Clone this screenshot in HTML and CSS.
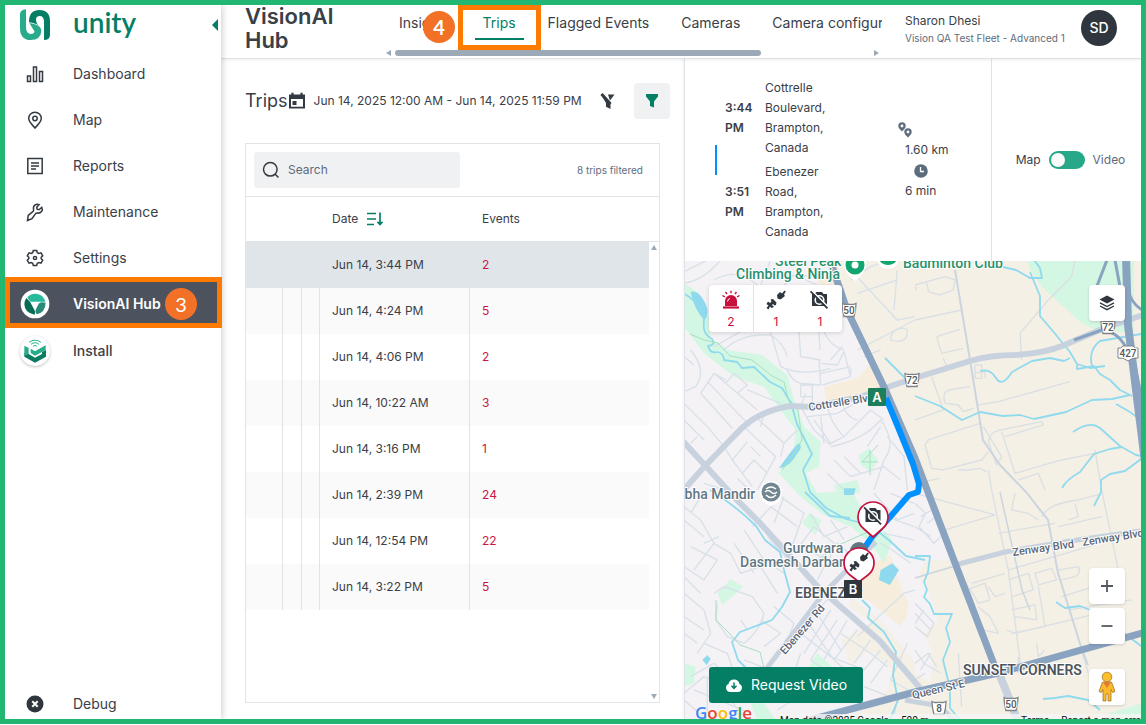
FILE: index.html
```html
<!DOCTYPE html>
<html lang="en">
<head>
<meta charset="utf-8">
<title>VisionAI Hub - Trips</title>
<link rel="stylesheet" href="styles.css">
</head>
<body>
<div class="frame">
  <aside class="sidebar">
    <div class="brand">
      <svg class="brand-mark" viewBox="57 26 96 96" aria-hidden="true">
        <path d="M78 27V78Q78 101 92 101Q101 101 104 94L88 68 105 72Q124 78 124 92Q122 119 92 119Q60 119 60 82V42Q60 28 78 27z" fill="#28ab8a"/>
        <path d="M87 62Q88 29 119 29Q150 29 150 64V104Q150 119 132 119V64Q132 47 119 47Q108 47 108 58Q108 68 116 76Q106 68 87 66z" fill="#047f65"/>
      </svg>
      <span class="brand-name">unity</span>
      <button class="collapse" aria-label="Collapse menu"></button>
    </div>
    <nav class="nav">
      <a href="#"><svg viewBox="0 0 20 20" class="line"><path d="M2.500 12h3v5.500h-3zM8.500 3h3v14.500h-3zM14.500 7.500h3v10h-3z"/></svg>Dashboard</a>
      <a href="#"><svg viewBox="0 0 20 20" class="line"><path d="M10 18C6 13.500 3.700 11.500 3.700 8.500a6.300 6.300 0 0 1 12.600 0C16.300 11.500 14 13.500 10 18z"/><circle cx="10" cy="8.500" r="2.200"/></svg>Map</a>
      <a href="#"><svg viewBox="0 0 20 20" class="line"><path d="M2.800 2.500h14.400v15H2.800zM6 7h8M6 10h8M6 13h5"/></svg>Reports</a>
      <a href="#"><svg viewBox="0 0 20 20" class="line"><path d="M16.800 5.300l-2.700 2.400-2-.5-.4-2 2.500-2.600C11 1.200 7.600 3.800 8.600 7.600c.2.900-.2 1.500-.8 2L3.200 13.300 2.500 18.500 7 16.600l3.400-4.700c.4-.6 1.200-.9 2-.8 3.600.3 6-2.700 4.400-5.800z"/></svg>Maintenance</a>
      <a href="#"><svg viewBox="0 0 20 20" class="line"><path d="M8.300 2.500h3.400l.6 2.200 1.500.8 2.200-.6 1.700 2.900-1.500 1.500v1.400l1.500 1.500-1.700 2.900-2.200-.6-1.500.8-.6 2.200H8.300l-.6-2.200-1.500-.8-2.200.6-1.700-2.900 1.500-1.500V9.300L2.300 7.800 4 4.900l2.200.6 1.500-.8z"/><circle cx="10" cy="10" r="1.600"/></svg>Settings</a>
      <a href="#" class="active"><svg viewBox="0 0 90 90" class="product"><circle cx="45" cy="45" r="43" fill="#fff"/><path d="M22 24Q33 13 48 14Q70 16 76 38H32Q24 32 22 24z" fill="#27ba9c"/><path d="M77 41Q76 70 50 76Q44 70 47 62L56 44Q62 38 77 41z" fill="#2a8a78"/><path d="M19 27L30 38 43 62Q47 68 44 77Q14 72 13 46Q13 35 19 27z" fill="#086b54"/></svg>VisionAI Hub<span class="badge badge-side">3</span></a>
      <a href="#" class="install"><svg viewBox="0 0 90 90" class="product"><circle cx="45" cy="45" r="44" fill="#fff"/><path d="M13 50L26 54 45 65 66 54V48L78 42V62L45 80 13 62z" fill="#0a7a61"/><path d="M13 29L26 36V54L13 60zM32 38L45 46 77 28V42L45 59 32 51z" fill="#27ab88"/><path d="M27 19Q45 6 63 19M33 25Q45 15 57 25M39 31Q45 25 51 31" fill="none" stroke="#27ba92" stroke-width="3"/></svg>Install</a>
    </nav>
    <a href="#" class="debug"><svg viewBox="0 0 20 20"><circle cx="10" cy="10" r="8.500" fill="#30363d"/><path d="M7.300 7.300l5.400 5.400M12.700 7.300l-5.400 5.400" stroke="#fff" stroke-width="2"/></svg>Debug</a>
  </aside>

  <div class="main">
    <header class="topbar">
      <h1>VisionAI Hub</h1>
      <div class="tabs-area">
        <nav class="tabs">
          <a href="#">Insights</a>
          <a href="#" class="current">Trips</a>
          <a href="#">Flagged Events</a>
          <a href="#">Cameras</a>
          <a href="#">Camera configuration</a>
        </nav>
        <div class="hscroll"><i class="arrow-left"></i><span class="track"><b></b></span><i class="arrow-right"></i></div>
        <span class="highlight"></span>
        <span class="badge badge-tab">4</span>
      </div>
      <div class="user">
        <div class="user-text"><div class="user-name">Sharon Dhesi</div><div class="user-fleet">Vision QA Test Fleet - Advanced 1</div></div>
        <button class="avatar">SD</button>
      </div>
    </header>

    <div class="content">
      <section class="trips">
        <div class="trips-head">
          <h2>Trips</h2>
          <button class="range"><svg viewBox="0 0 18 18"><path d="M1 2.500h16v14H1z" fill="#343a42"/><path d="M4.500 .8v3M13.500 .8v3" stroke="#343a42" stroke-width="2.200"/><path d="M3 7h12v7.700H3z" fill="#fff"/><path d="M4.500 9h4v4h-4z" fill="#343a42"/></svg>Jun 14, 2025 12:00 AM - Jun 14, 2025 11:59 PM</button>
          <button class="filter-off" aria-label="Clear filters"><svg viewBox="0 0 18 18"><path d="M2.500 3.500L11.500 11.500V17L7 14.800V11z" fill="#343a42"/><path d="M9 2.500h6.500L11 8.500z" fill="#343a42"/><path d="M3.500 1.500L14 12" stroke="#fff" stroke-width="1"/><path d="M2.500 2L11.500 12" stroke="#343a42" stroke-width="3"/></svg></button>
          <button class="filter" aria-label="Filter"><svg viewBox="0 0 16 16"><path d="M2 1h12v2.500L10 8.500v6L6 13V8.500L2 3.500z" fill="#047f65"/></svg></button>
        </div>
        <div class="card">
          <div class="tools">
            <label class="search"><svg viewBox="0 0 18 18"><circle cx="8.300" cy="8.300" r="6.800" fill="none" stroke="#343a42" stroke-width="1.500"/><path d="M13 13l3.500 3.500" stroke="#343a42" stroke-width="1.500"/></svg><input type="text" placeholder="Search" aria-label="Search"></label>
            <span class="count">8 trips filtered</span>
          </div>
          <table>
            <colgroup><col class="c1"><col class="c2"><col class="c3"><col class="c4"><col><col class="c6"></colgroup>
            <thead><tr><th></th><th></th><th></th><th class="date">Date <svg viewBox="0 0 16 14"><path d="M0 1.500h9M0 7h9M0 12.500h7" stroke="#047f65" stroke-width="1.600"/><path d="M13 .5v11M10.500 9.800L13 12.500l2.500-2.700" fill="none" stroke="#047f65" stroke-width="1.700"/></svg></th><th>Events</th><th></th></tr></thead>
            <tbody>
              <tr class="selected"><td></td><td></td><td></td><td>Jun 14, 3:44 PM</td><td>2</td></tr>
              <tr><td></td><td></td><td></td><td>Jun 14, 4:24 PM</td><td>5</td></tr>
              <tr><td></td><td></td><td></td><td>Jun 14, 4:06 PM</td><td>2</td></tr>
              <tr><td></td><td></td><td></td><td>Jun 14, 10:22 AM</td><td>3</td></tr>
              <tr><td></td><td></td><td></td><td>Jun 14, 3:16 PM</td><td>1</td></tr>
              <tr><td></td><td></td><td></td><td>Jun 14, 2:39 PM</td><td>24</td></tr>
              <tr><td></td><td></td><td></td><td>Jun 14, 12:54 PM</td><td>22</td></tr>
              <tr><td></td><td></td><td></td><td>Jun 14, 3:22 PM</td><td>5</td></tr>
            </tbody>
          </table>
          <i class="arrow-up"></i><i class="arrow-down"></i>
        </div>
      </section>

      <section class="detail">
        <div class="summary">
          <div class="legs">
            <span class="leg-line"></span>
            <div class="leg-list">
              <div class="leg"><strong>3:44 PM</strong><span>Cottrelle Boulevard, Brampton, Canada</span></div>
              <div class="leg"><strong>3:51 PM</strong><span>Ebenezer Road, Brampton, Canada</span></div>
            </div>
            <div class="stats">
              <svg class="pins" viewBox="0 0 14 16"><path fill-rule="evenodd" d="M4 9.500C1.500 7 .3 5.800.3 4a3.700 3.700 0 0 1 7.400 0C7.700 5.800 6.500 7 4 9.500zM4 2.600a1.400 1.400 0 1 0 0 2.800 1.400 1.400 0 0 0 0-2.800zM10 15.500C7.500 13 6.300 11.800 6.300 10a3.700 3.700 0 0 1 7.400 0c0 1.800-1.200 3-3.700 5.500zM10 8.600a1.400 1.400 0 1 0 0 2.800 1.400 1.400 0 0 0 0-2.800z" fill="#5d6c7d"/></svg>
              <span>1.60 km</span>
              <svg class="clock" viewBox="0 0 14 14"><circle cx="7" cy="7" r="6.800" fill="#5d6c7d"/><path d="M6.500 3v4.500H10" fill="none" stroke="#fff" stroke-width="1.300"/></svg>
              <span>6 min</span>
            </div>
          </div>
          <label class="switch"><span>Map</span><input type="checkbox" role="switch"><span class="muted">Video</span></label>
        </div>

        <div class="map">
          <svg class="map-art" viewBox="685 261 456 458" preserveAspectRatio="xMidYMid slice" role="img" aria-label="Trip map">
            <defs>
              <g id="shield"><path d="M-7-6.500L-4-5.500H4L7-6.500 6.500 0 5 6.500H-5L-6.500 0z" fill="#fff" stroke="#7f8387" stroke-width="1.300"/></g>
              <g id="nocam"><path d="M2 4H4L6.500 2H12L13.500 4H17V16H2z" fill="#30363d"/><circle cx="9.500" cy="10" r="4.300" fill="none" stroke="#fff" stroke-width="1.600"/><path d="M1.500 .3L19 17.800" stroke="#fff" stroke-width="1.800"/><path d="M.5 1.300L17.500 18.300" stroke="#30363d" stroke-width="1.800"/></g>
              <g id="plug" fill="#30363d"><path d="M11 5L14 2 16 3.500 18.500.5 19.800 1.500 18 4.500 19 6 14.500 9.500 11.500 8.500z"/><path d="M4.500 9.500L7 9 10.500 12.500 10 15 8.500 15.500 7 14 6 15 8 17 5.500 18 4 16.500 2.500 19.500.5 18 2.500 15.500.5 14 2 11.500 4 13 5.500 11.500z"/></g>
            </defs>
            <rect x="600" y="200" width="640" height="600" fill="#f4f2f5"/>
            <path d="M829 261L886 390 918 470 1000 680 1018 730H1240V200H800z" fill="#f5f0e5"/>
            <path d="M852 598L880 620 905 650 930 684 932 650 920 628 912 590 926 560 952 560 1002 680 1016 730H840L862 710 888 690 892 668 870 650 850 665 842 640 872 622 848 606z" fill="#f5f0e5"/>
            <path d="M862 570L890 555 902 590 912 610 900 626 868 600 850 598z" fill="#f6eddc"/>
            <path d="M818 280L836 276 846 300 820 288z" fill="#f6eddc"/>
            <path d="M914 570L928 590 938 620 918 640 906 620zM918 655l16 12-6 14-14-8z" fill="#f4f2f5"/>

            <!-- parks and ravines -->
            <g fill="#d3f7e2" transform="translate(684 260) scale(.3333)">
              <path d="M0 70L45 100 80 180 80 235 130 270 235 285 310 345 330 420 360 500 410 545 405 620 365 640 400 700 500 690 525 730 590 800 625 840 600 910 560 850 500 800 420 765 350 710 285 640 330 560 335 510 290 450 240 380 150 350 60 280 0 200z"/>
              <path d="M1028 0H1350V215L1250 215 1193 190 1073 80 1040 30z"/>
              <path d="M525 585L555 565 582 600 560 635 530 615zM355 790L375 760 412 780 395 825zM100 1000L140 958 178 980 115 1035zM375 1220L400 1180 445 1220zM0 1210L35 1220 30 1270 0 1280zM200 1330H240L275 1380H220zM1273 1360L1375 1330V1400H1290zM450 675L520 660 530 700H460z"/>
            </g>
            <path d="M824 387L858 378 872 362 885 388 868 394 826 402z" fill="#f6eddc"/>
            <g fill="#8fd9ee" transform="translate(684 260) scale(.3333)">
              <path d="M20 95Q50 90 70 145 72 170 62 180 30 150 20 95zM285 625Q330 560 345 550 358 560 340 580 320 620 285 625zM590 930L625 910 645 930 618 975 585 960zM480 685h35l-5 20h-30zM55 1200l15-15 10 12-12 18z"/>
            </g>

            <!-- residential streets -->
            <g class="street" transform="translate(684 260) scale(.3333)">
              <path d="M0 35L70 0M0 70Q60 60 110 0M90 60Q160 20 220 75M230 75L260 0M300 75L330 45 400 75M250 30Q350 60 420 40M90 260L170 215M120 270Q170 220 260 225 300 250 310 290M260 215L290 320Q350 350 440 325M345 215L350 290 410 300M405 215L408 270M405 300L410 375 350 370Q320 360 310 330M410 340L500 320M410 310L460 315 480 275 500 350 500 325M440 300L475 260M415 375L500 350M350 375H385V410H350zM385 380V440M420 215Q440 260 480 270"/>
              <path d="M20 270Q70 330 35 380L0 395M0 290L30 315M50 400L90 340 125 360M90 340L220 450M125 370L150 340 190 375 160 400M70 365L200 500M50 400L145 505M0 430L70 500 120 560M0 480L60 540M20 550L40 530M120 560L145 600 175 640 205 680M145 600L190 545M180 500L275 590M215 470L300 550 340 510M275 590L220 690M300 550L290 590M240 460L230 500M190 390L290 430M175 640L210 600 250 640M200 560L230 590M160 655L205 700M60 670L120 690"/>
              <path d="M365 400L350 440 390 510 440 555M370 470L460 460 530 420M390 480L440 550 480 530 560 450 600 480M430 420Q430 480 480 530M475 420Q480 470 520 480M410 470L420 550M440 560Q540 540 590 480 640 550 600 600L570 690M450 600L500 650 600 620 650 660M480 590L530 640M590 500L550 560M430 640L480 690M610 530L660 590 670 690"/>
              <path d="M0 740L50 780 90 850 30 930M50 710L20 760M0 780L60 830M20 860L100 900 60 960 0 920M90 850L140 880 170 940 230 920 280 1000M0 950L50 1000M180 810L240 900 300 940M150 850L210 940M105 830L60 850M250 830L330 920M90 1000L120 980 205 1010 240 1060Q230 1110 180 1150L130 1130 95 1080 100 1030M170 1080L190 1110M230 1080L290 1120 240 1160M270 1040L330 1090 300 1170M0 1000L60 1050 80 1120 40 1180M0 1070L60 1110M0 1120L40 1150M60 1150L130 1180 150 1240M20 1250L90 1210 130 1250M70 1250V1360M30 1290L200 1360M0 1320L70 1380M180 1200L260 1230M90 1260L180 1370M0 1300L60 1250 190 1300"/>
              <path d="M205 800L290 710 360 760 320 870M260 740L340 800M300 710L270 790M330 880L390 800 450 850 430 920M380 760L420 830 490 800M400 900L460 850 520 900M370 870L430 900 400 960M440 780L480 840M590 850L625 870 680 910M600 820L690 840M570 700L640 780 690 760M620 700L690 730M580 760L690 800M430 1020L350 1100 300 1160M440 1050L360 1180M460 1080L380 1200 440 1240M400 1060L470 1170M380 1100L450 1200M490 1080L420 1200M350 1120L440 1190 540 1230M520 1110L450 1200M560 1140L510 1210M470 1120L560 1180 610 1220M590 1170L540 1230M350 1180L330 1240 390 1290M450 1200L520 1260M610 1200L560 1270M670 1150L620 1260 690 1300M520 1130L660 1000 693 990M540 1280L640 1320 630 1370M280 1350L360 1300 400 1330"/>
              <path d="M693 730L725 760 705 800 750 850 770 830M710 770L760 740M693 800L740 830M730 790L770 760M693 1030L750 1090 730 1130 693 1100M693 1060L740 1110M720 1050L693 1090M693 1170L720 1210 770 1240M740 1180L710 1230"/>
              <path d="M500 60L560 20 620 0M520 100L640 60M500 30L640 180 693 170M520 270L693 180M620 240Q620 210 650 205T665 235Q650 250 620 240zM540 290L590 270M630 150L640 30"/>
            </g>
            <g class="street east" transform="translate(915 260) scale(.3333)">
              <path d="M0 75L90 50 120 60 115 90 75 105 40 95 35 65M5 90L0 80M0 180L140 150M65 230L135 208M65 230L80 280 145 265M85 295L95 320M320 300L315 220 400 120 470 50 480 0M50 350L85 450 0 480M180 315H200V355H180zM180 340L210 335V355M165 380L100 390Q80 400 90 430L130 435 145 455 175 445M190 435L250 425 465 365M195 490L40 540 30 555 50 625 85 630 200 600 220 575M205 500L260 590 245 615 220 545Q220 520 255 510L380 485 385 495 270 530M260 515L300 640 440 600 540 580M540 570L560 690M130 630H160L195 625 215 635M310 660L370 640 390 690M220 630L230 690M0 670L75 655"/>
              <path d="M0 700L240 765M90 810L240 765M230 690L280 930 320 1240M250 820L420 790M280 930L590 840M560 690L610 930M170 970L270 940M155 970L205 1110 250 1120 225 1070 190 1040M165 985L210 970 225 1020 190 1030zM220 980L240 1010 270 1000M280 960L340 940 355 990 290 1010M360 940L410 925 425 960 370 975zM430 930L490 920Q500 940 480 950L440 960M370 980L390 1100 290 1120M290 1050L360 1035 365 1080 300 1070M275 1110L300 1120 550 1060M440 1010L570 970M460 1050L650 1020M380 770Q400 730 490 720L565 700M300 700L290 750 340 760 370 780M480 730L490 770 460 780M430 800L560 770M365 1150L370 1190 390 1170M310 1190V1240M130 1180L140 1340M500 1170L520 1240M0 1210L40 1180 65 1220M0 1260L30 1240"/>
            </g>

            <!-- collector roads -->
            <g fill="none" stroke="#cbd5e0" stroke-width="2">
              <path d="M955 270L970 360 983 440 1000 465 1026 492 1048 520 1058 573 1082 650 1088 665"/>
              <path d="M1000 492L1022 590 1030 610M915 578L955 566" stroke-width="1.500"/>
            </g>

            <!-- streams -->
            <g fill="none" stroke="#8fdaee" stroke-width="1.800" stroke-linejoin="round">
              <path d="M685 294Q704 306 704 322 702 334 712 339 716 345 708 346 710 354 718 352 724 354 724 360L737 362 742 368 754 367 770 382 782 388 791 403 797 424 806 442 812 454 803 470 810 492 826 508 846 519 870 525 890 541 906 556 925 560"/>
              <path d="M710 490Q735 505 756 526L765 540 780 552 784 570 790 592 782 607 772 620 740 632 732 642 738 660 750 672M805 492L830 516 850 518M862 600L870 608 868 618 884 632 896 652 893 675 898 700 890 719"/>
              <path d="M915 556H930L928 572 924 582 927 590 924 597 930 604 934 614 952 614 946 628 950 642 943 660 950 688 950 708 960 720M985 260L1003 267 1016 270 1030 278 1042 278 1040 268 1034 260M1030 272L1040 296 1040 316 1052 330 1070 352 1077 364 1090 368 1105 366"/>
              <path d="M980 371Q990 368 996 378T1012 372L1032 361 1050 358 1064 361 1070 358M1077 365V369L1094 366 1100 374 1110 380 1120 390 1132 396M1092 366Q1088 350 1100 341L1141 334"/>
              <path d="M885 358L905 378M915 396L940 406 962 420 980 412 1003 416 1020 415 1034 419 1066 412 1092 400 1112 399 1130 395M1116 404L1130 412 1141 420M1073 432Q1090 420 1100 428L1120 446 1136 455 1141 456M1062 488Q1066 480 1080 472L1094 454 1110 449 1122 447M1101 492V480L1110 474 1125 471 1141 459M1101 492L1094 506M1056 602L1065 608 1080 606 1100 614 1120 630 1141 646M1043 699L1055 698 1068 696 1088 700 1100 710"/>
            </g>
            <g fill="none" stroke="#a7dfc3" stroke-width="1"><path d="M690 334L704 340 718 343 730 356 752 360 772 376 784 382 788 398 798 410 802 440 790 460 782 470M716 600V620L728 632 740 645 760 652 764 668M820 560L832 548 868 532M862 462L878 445M862 462H878M870 450V475"/></g>

            <!-- arterials -->
            <g class="arterial">
              <path d="M681 493L704 467 742 428Q760 411 790 406L812 407 860 397 885 388 915 378 970 361Q990 355 1015 355 1045 353 1062 346L1102 329 1146 314"/>
              <path d="M680 438L735 498 760 523 818 587 880 641 920 688"/>
              <path d="M767 668L824 593 854 563 876 542" stroke-width="5"/>
              <path d="M955 565L1005 552 1070 541 1146 530" stroke-width="5"/>
              <path d="M998 671L1011 703 1018 722" stroke-width="8"/>
              <path d="M905 700L940 706 955 722" stroke-width="5"/>
            </g>
            <g class="highway">
              <path d="M831 263L847 310 884 387 915 458 955 563 995 667"/>
              <path d="M760 733L810 720 915 692 998 673 1146 632"/>
              <path d="M1126 255L1128 325 1146 470" stroke-width="8"/>
              <path d="M1114 255L1130 340 1146 420M1107 260L1097 286M1128 290Q1132 306 1146 312M1074 340L1102 330Q1120 332 1128 352" stroke-width="3"/>
            </g>

            <!-- trip route -->
            <path d="M886 398L900 432 913 464 919 484 918 492 909 495 890 517 872 537 858 557" fill="none" stroke="#0090ff" stroke-width="6" stroke-linejoin="round"/>

            <g class="poi" fill="#27916c">
              <text x="775" y="266">Steel Peak</text><text x="736" y="279">Climbing &amp; Ninja</text><text x="903" y="268">Badminton Club</text>
            </g>
            <g><path d="M855 281Q845 274 844 265A11 11 0 0 1 866 265Q865 274 855 281z" fill="#fff"/><circle cx="855" cy="265" r="9.500" fill="#12a56f"/><circle cx="855" cy="265" r="3.500" fill="#fff"/><path d="M877 258a11 11 0 0 0 22 0" fill="#fff"/><path d="M879 258a9 7 0 0 0 18 0" fill="#12a56f"/></g>
            <g class="poi" fill="#607783"><text x="677" y="499">abha Mandir</text><text x="783" y="553">Gurdwara</text><text x="740" y="567">Dasmesh Darbar</text></g>
            <path d="M771 506Q760 502 760 492A11 11 0 0 1 782 492Q782 502 771 506z" fill="#fff"/><circle cx="771" cy="492" r="9.500" fill="#718691"/><path d="M766 489q5-4 10 0M765 492q3-3 6 0 3 3 6 0M766 495q5 5 10 0" fill="none" stroke="#fff" stroke-width="1.500"/>
            <circle cx="859" cy="551" r="9" fill="#607783"/>
            <g class="place"><text x="795" y="598">EBENEZER</text><text x="963" y="675">SUNSET CORNERS</text></g>
            <g class="road-name">
              <text transform="translate(809 411) rotate(-9)">Cottrelle Blvd</text>
              <text transform="translate(785 655) rotate(-49)">Ebenezer Rd</text>
              <text transform="translate(1013 556) rotate(-8)">Zenway Blvd</text>
              <text transform="translate(1083 546) rotate(-9)">Zenway Blvd</text>
              <text transform="translate(913 699) rotate(-13)">Queen St E</text>
            </g>
            <g class="shields">
              <g transform="translate(849 310)"><use href="#shield"/><text y="4">50</text></g>
              <g transform="translate(912 380)"><use href="#shield"/><text y="4">72</text></g>
              <g transform="translate(1108 327)"><use href="#shield"/><text y="4">72</text></g>
              <g transform="translate(1128 353)"><path d="M-10-5Q-7-4-5-7H5Q7-4 10-5V5Q5 4 0 8-5 4-10 5z" fill="#fff" stroke="#7f8387"/><text y="4">427</text></g>
              <g transform="translate(939 708)"><use href="#shield"/><text y="4">8</text></g>
              <g transform="translate(1011 704)"><use href="#shield"/><text y="4">50</text></g>
            </g>
            <g class="marker"><rect x="868" y="388" width="18" height="18" rx="1" fill="#1b7f5c"/><text x="877" y="402">A</text></g>
            <path d="M873 537L864 529A15 15 0 1 1 882 529z" fill="#fff" stroke="#c8103f" stroke-width="1.700"/><use href="#nocam" x="863.500" y="506"/>
            <path d="M859 582L850 575A15 15 0 1 1 868 575z" fill="#fff" stroke="#c8103f" stroke-width="1.700"/><use href="#plug" x="849" y="552"/>
            <g class="marker"><rect x="844" y="580" width="18" height="18" rx="1" fill="#30363d"/><text x="853" y="594">B</text></g>
          </svg>

          <div class="events">
            <div><svg viewBox="0 0 20 20"><path d="M4 16V11a6 6 0 0 1 12 0v5z" fill="#c8103f"/><path d="M2 17.500h16" stroke="#c8103f" stroke-width="2.200"/><path d="M10 .8v2.500M4.500 2l1.500 2M15.500 2L14 4M1.500 5.500l2.300 1.300M18.500 5.500l-2.300 1.300" stroke="#c8103f" stroke-width="1.400"/><path d="M6.500 11.500q.3-2.500 2.500-3" fill="none" stroke="#fff"/></svg>2</div>
            <div><svg viewBox="0 0 20 20"><use href="#plug"/></svg>1</div>
            <div><svg viewBox="0 0 20 20"><use href="#nocam"/></svg>1</div>
          </div>
          <button class="map-btn layers" aria-label="Layers"><svg viewBox="0 0 18 18"><path d="M9 1.500L16.500 5.500 9 9.500 1.500 5.500z" fill="#30363d"/><path d="M2 8.800l7 3.700 7-3.700M2 12l7 3.700L16 12" fill="none" stroke="#30363d" stroke-width="1.400"/></svg></button>
          <div class="map-side">
            <button class="map-btn" aria-label="Zoom in"><svg viewBox="0 0 18 18"><path d="M9 3v12M3 9h12" stroke="#555a60" stroke-width="1.800"/></svg></button>
            <button class="map-btn" aria-label="Zoom out"><svg viewBox="0 0 18 18"><path d="M3.500 9h11" stroke="#555a60" stroke-width="1.800"/></svg></button>
            <button class="map-btn pegman" aria-label="Street View"><svg viewBox="0 0 20 32"><path d="M5.500 11h9L18 20.500l-2.500 1-1.500-3V30h-3v-7H9v7H6V18.500l-1.500 3-2.500-1z" fill="#fcb929" stroke="#a27631" stroke-width=".8"/><path d="M6 11h8l-4 6z" fill="#e37b35"/><circle cx="10" cy="6" r="4.800" fill="#fcc02c" stroke="#a27631" stroke-width=".8"/></svg></button>
          </div>
          <button class="request"><svg viewBox="0 0 18 18"><path d="M5 16a4.200 4.200 0 0 1-1.500-8A5.600 5.600 0 0 1 14.500 8 4.200 4.200 0 0 1 13 16z" fill="#fff"/><path d="M9 6.500v5.500M6.500 9.800L9 12.500l2.500-2.700" fill="none" stroke="#047f65" stroke-width="1.500"/></svg>Request Video</button>
          <div class="google"><span class="gb">G</span><span class="gr">o</span><span class="gy">o</span><span class="gb">g</span><span class="gg">l</span><span class="gr">e</span></div>
          <div class="legal"><span>Map data ©2025 Google</span><span>500 m</span><a href="#">Terms</a><a href="#">Report a map error</a></div>
        </div>
      </section>
    </div>
  </div>
</div>
</body>
</html>
```
FILE: styles.css
```css
* { box-sizing: border-box; }
body { margin: 0; height: 100vh; padding-bottom: 1px; background: #fff; color: #3a4048; font: 13px/20px Inter, "Liberation Sans", sans-serif; overflow: hidden; }
button { border: 0; padding: 0; background: none; font: inherit; color: inherit; }
a { color: inherit; text-decoration: none; }
svg { display: block; flex: none; }
h1, h2 { margin: 0; font-weight: 400; }
.frame { display: flex; height: 100%; border: 5px solid #22b673; overflow: hidden; }

.sidebar { display: flex; flex-direction: column; flex: none; width: 216px; position: relative; z-index: 2; background: #fff; box-shadow: 2px 0 6px rgba(0, 0, 0, .16); font-size: 14px; }
.brand { display: flex; align-items: center; height: 46px; padding: 0 3px 6px 14px; }
.brand-mark { width: 32px; height: 32px; }
.brand-name { margin-left: 22px; padding-bottom: 6px; color: #047f65; font: 600 28px/32px Lato, sans-serif; }
.collapse { margin-left: auto; border: 6px solid transparent; border-right-color: #047f65; border-left: 0; }
.nav a, .debug { display: flex; align-items: center; gap: 28px; height: 46px; padding-left: 20px; }
.nav svg, .debug svg { width: 20px; height: 20px; }
.line { fill: none; stroke: #343a42; stroke-width: 1.5; }
.nav .product { width: 30px; height: 30px; margin: 0 -5px; }
.nav .active { position: relative; height: 51px; margin: -4px -1px 0 0; padding: 2px 0 0 15px; border: 5px solid #ff7a00; background: #4d535e; color: #fff; font-weight: 600; }
.nav .install { font-weight: 500; }
.install .product { border-radius: 50%; box-shadow: 0 1px 3px rgba(0, 0, 0, .25); }
.debug { height: 30px; margin-top: auto; }
.badge { position: absolute; width: 32px; height: 32px; border-radius: 50%; background: #f37127; color: #fff; text-align: center; font: 700 20px/32px Lato, sans-serif; }
.badge-side { left: 155px; top: 6px; font-weight: 400; }

.main { display: flex; flex-direction: column; flex: 1; min-width: 0; }
.topbar { display: flex; height: 54px; flex: none; padding-left: 24px; border-bottom: 1px solid #dde3e7; position: relative; z-index: 1; box-shadow: 0 1px 3px rgba(0, 0, 0, .08); }
h1 { width: 138px; flex: none; font-size: 22px; line-height: 24px; font-weight: 600; padding-right: 40px; margin-top: -1px; }
.tabs-area { position: relative; flex: 1; min-width: 0; padding-left: 8px; }
.tabs { display: flex; gap: 16px; overflow: hidden; height: 45px; white-space: nowrap; font-size: 14px; }
.tabs a { flex: none; height: 35px; padding: 8px 8px 0; }
.tabs .current { color: #047f65; border-bottom: 2px solid #047f65; }
.hscroll { display: flex; align-items: center; gap: 4px; height: 6px; margin-left: -5px; padding-right: 3px; }
.track { flex: 1; }
.track b { display: block; width: 77%; height: 6px; border-radius: 3px; background: #9caab8; }
.arrow-left, .arrow-right { border: 3px solid transparent; border-right: 5px solid #9caab8; border-left: 0; }
.arrow-right { border-left: 5px solid #9caab8; border-right: 0; }
.highlight { position: absolute; left: 75px; top: 0; width: 83px; height: 45px; border: 5px solid #ff7a00; }
.badge-tab { left: 40px; top: 6px; }
.user { display: flex; flex: none; width: 259px; padding: 5px 24px 0 23px; justify-content: space-between; }
.user-text { padding-top: 2px; }
.user-name { line-height: 18px; font-size: 12px; }
.user-fleet { font-size: 10px; line-height: 16px; color: #5d6c7d; white-space: nowrap; }
.avatar { width: 36px; height: 36px; border-radius: 50%; background: #30363d; color: #fff; font-size: 14px; font-weight: 500; }

.content { display: grid; grid-template-columns: 463fr 457fr; flex: 1; min-height: 0; }
.trips { display: flex; flex-direction: column; padding: 24px 24px 16px; min-width: 0; }
.trips-head { display: flex; align-items: center; height: 36px; margin-right: -10px; white-space: nowrap; }
h2 { font-size: 18px; }
.range { display: flex; align-items: center; gap: 8px; font-size: 12px; }
.range svg, .filter-off svg { width: 18px; height: 18px; }
.filter-off { margin-left: 17px; }
.filter { margin-left: 17px; padding: 10px; background: #f0f1f3; border-radius: 4px; }
.filter svg { width: 16px; height: 16px; }
.card { position: relative; display: flex; flex-direction: column; flex: 1; margin-top: 24px; border: 1px solid #dfe4e9; }
.tools { display: flex; justify-content: space-between; align-items: center; padding: 8px 16px 8px 8px; border-bottom: 1px solid #dfe4e9; }
.search { display: flex; align-items: center; gap: 8px; width: 206px; height: 36px; padding: 0 8px; background: #f0f1f3; border-radius: 3px; }
.search svg { width: 18px; height: 18px; }
.search input { width: 100%; min-width: 0; border: 0; padding: 0; background: none; font: inherit; font-size: 12px; }
.search input::placeholder { color: #5d6c7d; opacity: 1; }
.count { font-size: 10px; color: #5d6c7d; }
table { width: 100%; table-layout: fixed; border-spacing: 0; font-size: 12px; }
.c1 { width: 37px; } .c2 { width: 19px; } .c3 { width: 18px; } .c4 { width: 150px; } .c6 { width: 10px; }
th { height: 45px; padding: 0 0 0 12px; text-align: left; font-weight: 400; border-bottom: 1px solid #dfe4e9; white-space: nowrap; }
th:first-child, th:nth-child(2), th:nth-child(3), th:last-child { padding: 0; }
th svg { display: inline-block; vertical-align: -3px; width: 16px; height: 14px; margin-left: 5px; }
td { height: 46px; padding: 0; border-right: 1px solid #dfe4e9; }
td:nth-child(n + 4) { padding-left: 12px; }
td:last-child { border-right: 0; color: #cb1643; }
tbody tr:nth-child(even) td { background: #fafafa; }
tbody .selected td { background: #e0e5ea; border-color: #e0e5ea; }
.arrow-up, .arrow-down { position: absolute; right: 2px; border: 3px solid transparent; }
.arrow-up { top: 101px; border-top: 0; border-bottom: 5px solid #9caab8; }
.arrow-down { bottom: 3px; border-bottom: 0; border-top: 5px solid #9caab8; }

.detail { display: flex; flex-direction: column; min-width: 0; border-left: 1px solid #dde3e7; box-shadow: -1px 0 3px rgba(0, 0, 0, .05); }
.summary { display: flex; height: 202px; flex: none; font-size: 12px; }
.legs { display: flex; align-items: center; flex: 1; padding-left: 30px; border-right: 1px solid #dde3e7; }
.leg-line { width: 2px; height: 30px; background: #0090ff; }
.leg-list { display: grid; gap: 4px; margin-left: 8px; }
.leg { display: grid; grid-template-columns: 30px 80px; gap: 10px; align-items: center; }
.leg strong { font-weight: 600; }
.stats { display: grid; justify-items: start; margin-left: 60px; }
.pins { width: 14px; height: 16px; margin: 2px 0 2px -7px; }
.clock { width: 14px; height: 14px; margin: 4px 0 3px 9px; }
.switch { display: flex; align-items: center; justify-content: center; gap: 8px; width: 149px; padding-left: 8px; }
.switch input { appearance: none; margin: 0; width: 36px; height: 18px; padding: 2px; border-radius: 9px; background: #27a989; }
.switch input::before { content: ""; display: block; width: 14px; height: 14px; border-radius: 50%; background: #fafafa; }
.muted { color: #5d6c7d; }

.map { position: relative; flex: 1; min-height: 0; overflow: hidden; background: #f4f2f5; }
.map-art { width: 100%; height: 100%; font-family: Roboto, sans-serif; }
.street { fill: none; stroke: #d8e0e8; stroke-width: 4; stroke-linejoin: round; }
.street.east { stroke: #dadfe3; }
.arterial { fill: none; stroke: #c8d2de; stroke-width: 6; }
.highway { fill: none; stroke: #8aa3c0; stroke-width: 7; stroke-linejoin: round; }
.poi text { font-size: 14px; font-weight: 500; }
.map-art text { paint-order: stroke; stroke: #fff; stroke-width: 2px; stroke-linejoin: round; }
.place { font-size: 14px; font-weight: 600; fill: #4d545c; }
.road-name { font-size: 11px; font-weight: 500; fill: #5b6777; }
.shields { font-size: 10px; font-weight: 500; fill: #505860; text-anchor: middle; }
.map-art .marker text { stroke: none; fill: #fff; font: 600 13px Inter, sans-serif; text-anchor: middle; }
.events { position: absolute; left: 24px; top: 24px; display: grid; grid-template-columns: 45px 44px 44px; height: 47px; background: #fff; border-radius: 4px; box-shadow: 0 1px 4px rgba(0, 0, 0, .15); color: #c8103f; font-size: 12px; }
.events div { display: flex; flex-direction: column; align-items: center; padding-top: 5px; line-height: 23px; }
.events div:first-child { border-right: 1px solid #dde3e7; }
.events svg { width: 20px; height: 20px; }
.map-btn { display: grid; place-items: center; width: 36px; height: 36px; background: #fff; border-radius: 4px; box-shadow: 0 1px 3px rgba(0, 0, 0, .15); }
.map-btn svg { width: 18px; height: 18px; }
.layers { position: absolute; right: 16px; top: 24px; }
.map-side { position: absolute; right: 16px; bottom: 14px; display: grid; gap: 4px; }
.pegman { margin-top: 21px; }
.pegman svg { width: 20px; height: 32px; }
.request { position: absolute; left: 24px; bottom: 16px; display: flex; align-items: center; gap: 8px; height: 36px; padding: 0 16px; background: #047f65; color: #fff; border-radius: 3px; font-size: 14px; }
.request svg { width: 18px; height: 18px; }
.google { position: absolute; left: 10px; bottom: -5px; font: 600 17px/22px "Open Sans", sans-serif; text-shadow: 0 0 2px #fff; }
.gb { color: #4285f4; } .gr { color: #ea4335; } .gy { color: #fbbc05; } .gg { color: #34a853; }
.legal { position: absolute; right: 0; bottom: -9px; width: 361px; display: flex; gap: 12px; height: 14px; background: rgba(245, 245, 245, .8); font: 10px/14px Roboto, sans-serif; color: #111; white-space: nowrap; }
.legal a:first-of-type { margin-left: 80px; }
```
